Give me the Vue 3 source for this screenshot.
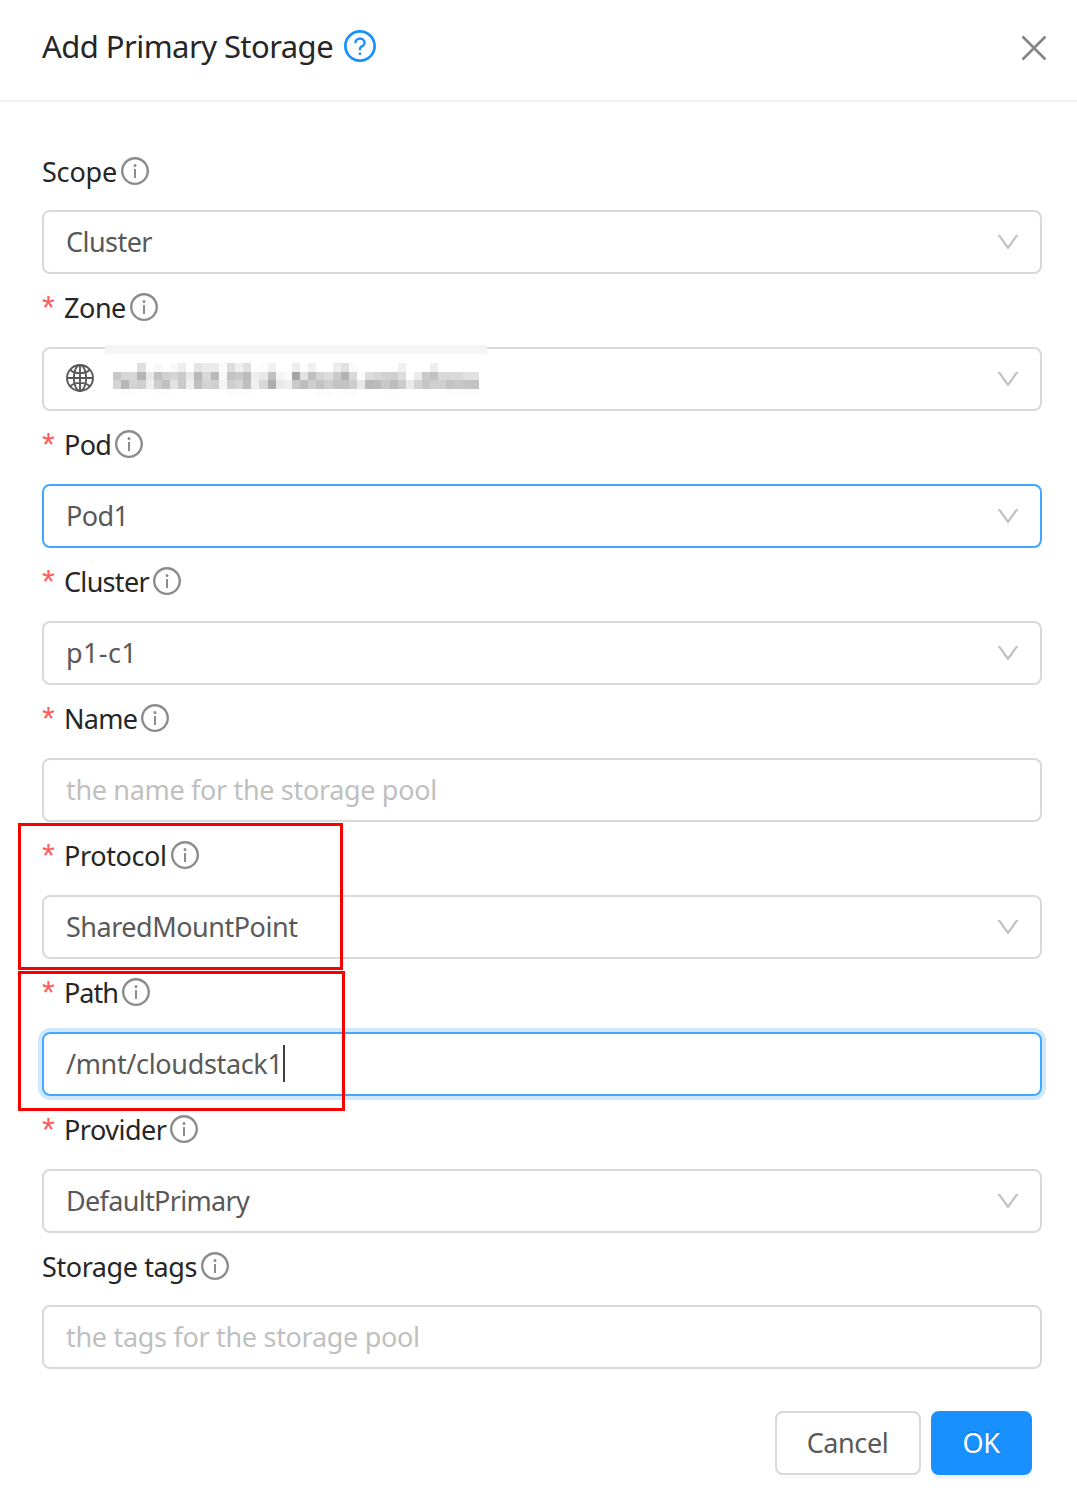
<script setup>
import { ref } from 'vue'

// labelTrack / textTrack: letter spacing in px
const fields = ref([
  { id: 'scope', label: 'Scope', labelTrack: -0.2, type: 'select', value: 'Cluster', textTrack: -0.55 },
  { id: 'zone', label: 'Zone', labelTrack: -0.45, type: 'select', required: true, masked: true },
  { id: 'pod', label: 'Pod', labelTrack: -0.65, type: 'select', value: 'Pod1', textTrack: -0.6, required: true, active: true },
  { id: 'cluster', label: 'Cluster', labelTrack: -0.7, type: 'select', value: 'p1-c1', textTrack: 0.4, required: true },
  { id: 'name', label: 'Name', labelTrack: -0.75, type: 'input', placeholder: 'the name for the storage pool', textTrack: -0.33, required: true },
  { id: 'protocol', label: 'Protocol', labelTrack: -0.38, type: 'select', value: 'SharedMountPoint', textTrack: -0.48, required: true },
  { id: 'path', label: 'Path', labelTrack: -1, type: 'input', value: '/mnt/cloudstack1', textTrack: -0.34, required: true, focused: true },
  { id: 'provider', label: 'Provider', labelTrack: -0.5, type: 'select', value: 'DefaultPrimary', textTrack: -0.68, required: true },
  { id: 'tags', label: 'Storage tags', labelTrack: -0.42, type: 'input', placeholder: 'the tags for the storage pool', textTrack: -0.3 }
])

// grey levels of the masked zone name, two hex digits per cell
const maskRows = [
  'ffffffdffdf8fdf8edffe4ebebfbddf0e0fffdf1ffffeefdf0ffffede0fafffffffffff0ffffffeeffffffffff',
  'c8d7d7b4e8c0d0d4cae8b8d8b9f7c2c8bbeee8c0f5fba5e2bfd5ddcab2d8fbdcd6d1cfdcfdecc9c2d8d8d8e1e1',
  'd4b7d3cfeeccc0e2caeec0d3cff3ced5bff0d8ade8eec9bdcec2cec3c3cde8b9bbc8bccbead3c7cfcfc3c8c4c3',
  'fffdfdfffffdfdfffffffffffffffdfdfdfffffffffffffffffdfdfffdfdfffffffffdfffffffffffffdfdfdfd'
]
const maskCells = maskRows.flatMap((row, y) =>
  row.match(/../g).map((g, x) => ({ x, y, fill: `#${g}${g}${g}` }))
)
</script>

<template>
  <section class="modal">
    <header class="modal-header">
      <h1>Add Primary Storage</h1>
      <svg class="help-icon" viewBox="64 64 896 896">
        <path d="M512 64C264.6 64 64 264.6 64 512s200.6 448 448 448 448-200.6 448-448S759.4 64 512 64zm0 820c-205.4 0-372-166.6-372-372s166.6-372 372-372 372 166.6 372 372-166.6 372-372 372z" />
        <path d="M623.6 316.7C593.6 290.4 554 276 512 276s-81.6 14.5-111.6 40.7C369.2 344 352 380.7 352 420v7.6c0 4.4 3.6 8 8 8h48c4.4 0 8-3.6 8-8V420c0-44.1 43.1-80 96-80s96 35.9 96 80c0 31.1-22 59.6-56.1 72.7-21.2 8.1-39.2 22.3-52.1 40.9-13.1 19-19.9 41.8-19.9 64.9V620c0 4.4 3.6 8 8 8h48c4.4 0 8-3.6 8-8v-22.7a48.3 48.3 0 0 1 30.9-44.8c59-22.7 97.1-74.7 97.1-132.5.1-39.3-17.1-76-48.3-103.3zM472 732a40 40 0 1 0 80 0 40 40 0 1 0-80 0z" />
      </svg>
      <svg class="close-icon" viewBox="0 0 26 26">
        <path d="M1.5 1.5 L24.5 24.5 M24.5 1.5 L1.5 24.5" />
      </svg>
    </header>

    <form class="form" @submit.prevent>
      <div v-for="field in fields" :key="field.id" class="form-item">
        <div class="label" :class="{ required: field.required }">
          <span v-if="field.required" class="star">*</span>
          <span class="label-text" :style="{ letterSpacing: `${field.labelTrack}px` }">{{ field.label }}</span>
          <svg class="info-icon" viewBox="64 64 896 896">
            <path d="M512 64C264.6 64 64 264.6 64 512s200.6 448 448 448 448-200.6 448-448S759.4 64 512 64zm0 820c-205.4 0-372-166.6-372-372s166.6-372 372-372 372 166.6 372 372-166.6 372-372 372z" />
            <path d="M464 336a48 48 0 1 0 96 0 48 48 0 1 0-96 0zm72 112h-48c-4.4 0-8 3.6-8 8v272c0 4.4 3.6 8 8 8h48c4.4 0 8-3.6 8-8V456c0-4.4-3.6-8-8-8z" />
          </svg>
        </div>

        <div class="control" :class="{ active: field.active, focused: field.focused }">
          <template v-if="field.masked">
            <svg class="globe-icon" viewBox="0 0 28 28">
              <circle cx="14" cy="14" r="13" />
              <ellipse cx="14" cy="14" rx="6.2" ry="13" />
              <path d="M14 1 V27 M1 14 H27 M4.3 5.7 C9 10.3 19 10.3 23.7 5.7 M4.3 22.3 C9 17.7 19 17.7 23.7 22.3" />
            </svg>
            <svg class="mask" viewBox="0 0 45 4" preserveAspectRatio="none" shape-rendering="crispEdges">
              <rect v-for="c in maskCells" :key="`${c.x}-${c.y}`" :x="c.x" :y="c.y" width="1" height="1" :fill="c.fill" />
            </svg>
            <span class="mask-edge"></span>
          </template>
          <span
            v-else
            class="text"
            :class="{ placeholder: !field.value }"
            :style="{ letterSpacing: `${field.textTrack}px` }"
          >{{ field.value || field.placeholder }}</span>
          <span v-if="field.focused" class="caret"></span>

          <svg v-if="field.type === 'select'" class="arrow" viewBox="0 0 1024 1024">
            <path d="M884 256h-75c-5.1 0-9.9 2.5-12.9 6.6L512 654.2 227.9 262.6c-3-4.1-7.8-6.6-12.9-6.6h-75c-6.5 0-10.3 7.4-6.5 12.7l352.6 486.1c12.8 17.6 39 17.6 51.7 0l352.6-486.1c3.9-5.3.1-12.7-6.4-12.7z" />
          </svg>
        </div>
      </div>

      <div class="actions">
        <button type="button" class="button">Cancel</button>
        <button type="submit" class="button primary">OK</button>
      </div>
    </form>

    <div class="highlight highlight-protocol"></div>
    <div class="highlight highlight-path"></div>
  </section>
</template>

<style>
body {
  margin: 0;
  background: #fff;
}
</style>

<style scoped>
.modal {
  position: relative;
  box-sizing: border-box;
  width: 1077px;
  height: 1512px;
  overflow: hidden;
  background: #fff;
  color: #262626;
  font-family: "Noto Sans", "Open Sans", sans-serif;
  font-size: 27px;
}

.modal-header {
  display: flex;
  align-items: center;
  box-sizing: border-box;
  height: 102px;
  padding: 0 30px 8px 42px;
  border-bottom: 2px solid #f0f0f0;
}

h1 {
  margin: 0;
  font-size: 31px;
  font-weight: 400;
  line-height: 44px;
  letter-spacing: -0.56px;
  white-space: nowrap;
}

.help-icon {
  width: 32px;
  height: 32px;
  margin-left: 11px;
  fill: #1890ff;
}

.close-icon {
  width: 26px;
  height: 26px;
  margin-left: auto;
  margin-top: 4px;
  fill: none;
  stroke: #858585;
  stroke-width: 2.6;
}

.form {
  padding: 36px 35px 0 42px;
}

.label {
  display: flex;
  align-items: center;
  box-sizing: border-box;
  height: 72px;
  padding-bottom: 6px;
}

.label.required {
  height: 73px;
  padding-bottom: 7px;
}

.label-text {
  padding-top: 2px;
  line-height: 38px;
  white-space: nowrap;
}

.star {
  width: 22px;
  padding-top: 2px;
  color: #ff5c5e;
  font-family: "Liberation Sans", sans-serif;
  font-size: 33px;
  line-height: 32px;
}

.info-icon {
  width: 28px;
  height: 28px;
  margin-left: 4px;
  fill: #8c8c8c;
}

.control {
  position: relative;
  display: flex;
  align-items: center;
  box-sizing: border-box;
  width: 1000px;
  height: 64px;
  padding: 0 18px 0 22px;
  border: 2px solid #d9d9d9;
  border-radius: 8px;
  color: #595959;
}

.control.active,
.control.focused {
  border-color: #40a9ff;
}

.control.focused {
  box-shadow: 0 0 0 4px #d1e9ff;
}

.text {
  line-height: 38px;
  white-space: nowrap;
}

.placeholder {
  color: #bfbfbf;
}

.caret {
  width: 2px;
  height: 37px;
  margin-bottom: 1px;
  background: #404040;
}

.arrow {
  width: 28px;
  height: 28px;
  margin-left: auto;
  fill: #bfbfbf;
}

.globe-icon {
  width: 28px;
  height: 28px;
  margin-bottom: 2px;
  fill: none;
  stroke: #595959;
  stroke-width: 1.9;
}

.mask {
  width: 366px;
  height: 34px;
  margin: 2px 0 0 19px;
}

/* upper rim of the masked region, lies over the border */
.mask-edge {
  position: absolute;
  top: -4px;
  left: 61px;
  width: 382px;
  height: 9px;
  background: #f5f5f5;
}

.actions {
  display: flex;
  justify-content: flex-end;
  gap: 10px;
  padding: 42px 10px 0 0;
}

.button {
  box-sizing: border-box;
  width: 146px;
  height: 64px;
  padding: 0 1px 1px 0;
  border: 2px solid #d9d9d9;
  border-radius: 8px;
  background: #fff;
  box-shadow: 0 4px 0 rgba(0, 0, 0, 0.015);
  color: #595959;
  font: inherit;
  letter-spacing: -0.4px;
}

.button.primary {
  width: 101px;
  border-color: #1890ff;
  background: #1890ff;
  box-shadow: 0 4px 0 rgba(0, 0, 0, 0.045);
  color: #fff;
  text-shadow: 0 -2px 0 rgba(0, 0, 0, 0.12);
}

.highlight {
  position: absolute;
  box-sizing: border-box;
  left: 18px;
  border: 3px solid #f80000;
  pointer-events: none;
}

.highlight-protocol {
  top: 823px;
  width: 325px;
  height: 147px;
}

.highlight-path {
  top: 971px;
  width: 327px;
  height: 140px;
}
</style>
